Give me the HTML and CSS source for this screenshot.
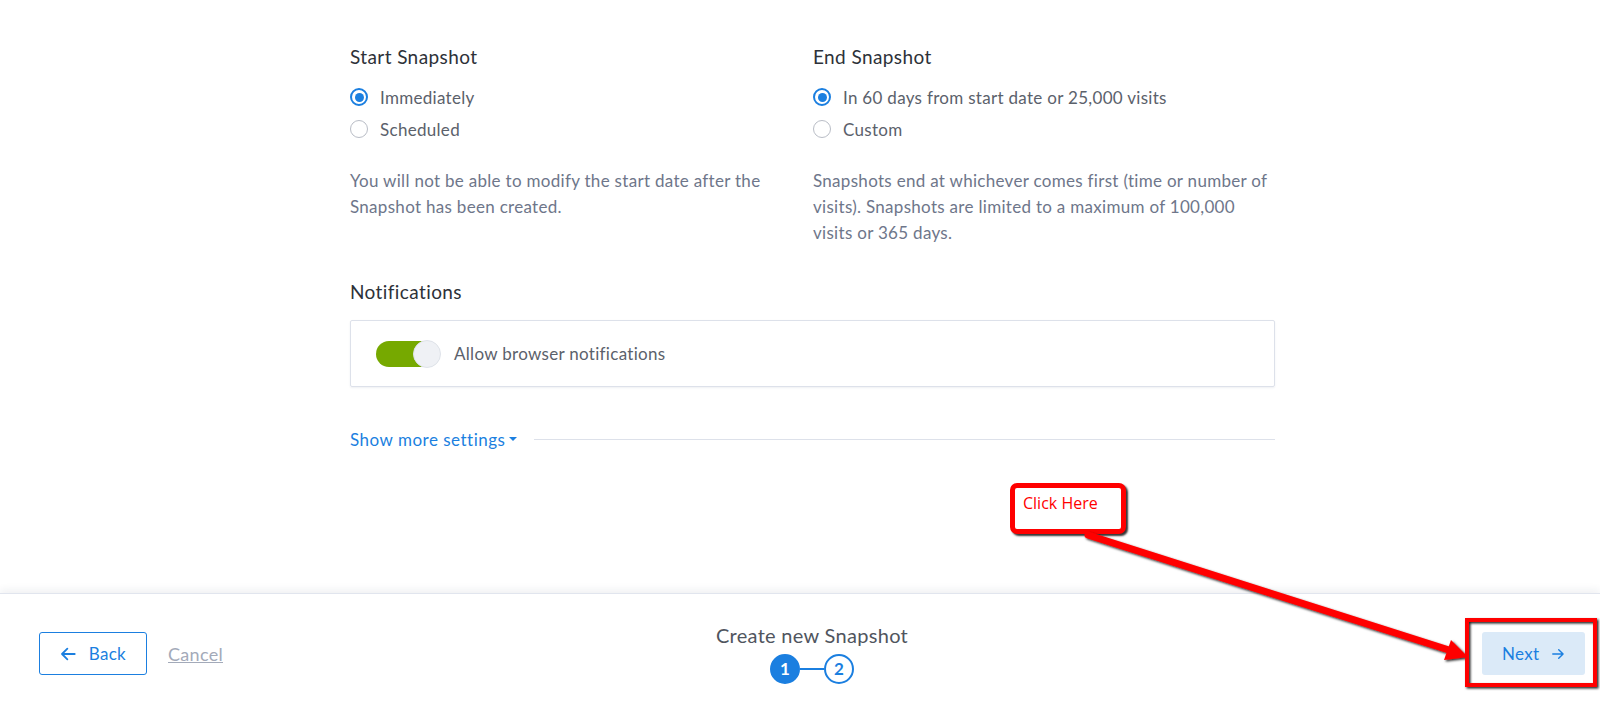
FILE: index.html
```html
<!DOCTYPE html>
<html lang="en">
<head>
  <meta charset="UTF-8">
  <meta name="viewport" content="width=device-width, initial-scale=1.0">
  <title>Create new Snapshot</title>
  <link rel="stylesheet" href="styles.css">
</head>
<body>

<main class="settings">
  <div class="columns">
    <section class="group">
      <h2 class="group-title">Start Snapshot</h2>
      <ul class="radio-list">
        <li class="radio-row"><span class="radio checked"></span>Immediately</li>
        <li class="radio-row"><span class="radio"></span>Scheduled</li>
      </ul>
      <p class="hint">You will not be able to modify the start date after the Snapshot has been created.</p>
    </section>
    <section class="group">
      <h2 class="group-title">End Snapshot</h2>
      <ul class="radio-list">
        <li class="radio-row"><span class="radio checked"></span>In 60 days from start date or 25,000 visits</li>
        <li class="radio-row"><span class="radio"></span>Custom</li>
      </ul>
      <p class="hint">Snapshots end at whichever comes first (time or number of visits). Snapshots are limited to a maximum of 100,000 visits or 365 days.</p>
    </section>
  </div>

  <h2 class="group-title notif-title">Notifications</h2>
  <div class="notif-box">
    <span class="toggle on"><span class="knob"></span></span>
    <span class="notif-label">Allow browser notifications</span>
  </div>

  <div class="more-row">
    <a class="more-link" href="#">Show more settings<span class="caret"></span></a>
    <span class="more-line"></span>
  </div>
</main>

<footer class="wizard-bar">
  <div class="bar-left">
    <button class="btn btn-outline">
      <svg width="16" height="14" viewBox="0 0 16 14"><path d="M15 7H2M7.5 1.5 2 7l5.5 5.5" fill="none" stroke="currentColor" stroke-width="1.8" stroke-linecap="round" stroke-linejoin="round"/></svg>
      Back
    </button>
    <a class="cancel" href="#">Cancel</a>
  </div>
  <div class="bar-center">
    <div class="wizard-title">Create new Snapshot</div>
    <div class="steps">
      <span class="step active">1</span>
      <span class="step-line"></span>
      <span class="step">2</span>
    </div>
  </div>
  <div class="bar-right">
    <button class="btn btn-soft">
      Next
      <svg width="16" height="14" viewBox="0 0 16 14"><path d="M1 7h13M8.5 1.5 14 7l-5.5 5.5" fill="none" stroke="currentColor" stroke-width="1.8" stroke-linecap="round" stroke-linejoin="round"/></svg>
    </button>
  </div>
</footer>

<!-- annotation drawn over the screenshot -->
<div class="callout">Click Here</div>
<svg class="annotation" width="1600" height="704" viewBox="0 0 1600 704">
  <defs>
    <filter id="shade" x="-10%" y="-10%" width="120%" height="120%">
      <feDropShadow dx="1.5" dy="1.5" stdDeviation="1" flood-color="#000" flood-opacity="0.85"/>
    </filter>
  </defs>
  <g filter="url(#shade)">
    <line x1="1088" y1="535" x2="1449" y2="650" stroke="#f00" stroke-width="7" stroke-linecap="round"/>
    <polygon points="1468,657 1444,660 1451,640" fill="#f00"/>
    <rect x="1467" y="620" width="128" height="65" fill="none" stroke="#f00" stroke-width="4"/>
  </g>
</svg>

</body>
</html>
```

FILE: styles.css
```css
body {
  margin: 0;
  font-family: Lato, "Open Sans", sans-serif;
  letter-spacing: 0.3px;
  background: #fff;
  color: #2d3138;
  height: 704px;
  overflow: hidden;
  position: relative;
}

.settings {
  box-sizing: border-box;
  height: 593px;
  width: 925px;
  margin-left: 350px;
  padding-top: 45px;
}

.columns {
  display: grid;
  grid-template-columns: 463px 463px;
}

.group-title {
  margin: 0;
  font-size: 19px;
  line-height: 24px;
  font-weight: 400;
  letter-spacing: 0.4px;
  color: #2d3138;
}

.radio-list {
  list-style: none;
  margin: 12px 0 0;
  padding: 0;
}
.radio-row {
  display: flex;
  align-items: center;
  height: 32px;
  font-size: 17px;
  color: #5b616b;
}
.radio {
  box-sizing: border-box;
  width: 18px;
  height: 18px;
  border-radius: 50%;
  border: 1.5px solid #b9bdc6;
  margin-right: 12px;
  display: flex;
  align-items: center;
  justify-content: center;
}
.radio.checked {
  border: 2px solid #1b7fe0;
}
.radio.checked::after {
  content: "";
  width: 9px;
  height: 9px;
  border-radius: 50%;
  background: #1b7fe0;
}

.hint {
  margin: 23px 0 0;
  font-size: 17px;
  line-height: 26px;
  color: #6e768a;
}

.notif-title {
  margin-top: 34px;
}
.notif-box {
  box-sizing: border-box;
  margin-top: 16px;
  height: 67px;
  border: 1px solid #dde1ea;
  border-radius: 2px;
  box-shadow: 0 1px 2px rgba(40, 60, 100, 0.08);
  display: flex;
  align-items: center;
  padding-left: 25px;
}
.toggle {
  position: relative;
  width: 64px;
  height: 26px;
  border-radius: 13px;
  background: #76a900;
}
.toggle .knob {
  position: absolute;
  right: -1px;
  top: -1px;
  box-sizing: border-box;
  width: 28px;
  height: 28px;
  border-radius: 50%;
  background: #eff1f5;
  border: 1px solid #dfe3ea;
}
.notif-label {
  margin-left: 14px;
  font-size: 17px;
  color: #5b616b;
}

.more-row {
  margin-top: 40px;
  display: flex;
  align-items: center;
  height: 24px;
}
.more-link {
  font-size: 17px;
  letter-spacing: 0.5px;
  color: #1b7fe0;
  text-decoration: none;
  display: flex;
  align-items: center;
}
.caret {
  margin-left: 4px;
  width: 0;
  height: 0;
  border-left: 4px solid transparent;
  border-right: 4px solid transparent;
  border-top: 4px solid #1b7fe0;
}
.more-line {
  flex: 1;
  margin-left: 17px;
  height: 1px;
  background: #dde1ea;
}

/* bottom wizard bar */
.wizard-bar {
  box-sizing: border-box;
  height: 111px;
  border-top: 1px solid #e1e5ee;
  box-shadow: 0 -3px 8px rgba(30, 40, 70, 0.07);
  display: grid;
  grid-template-columns: 1fr auto 1fr;
  align-items: center;
  padding: 9px 15px 0 39px;
}
.bar-left {
  display: flex;
  align-items: center;
}
.bar-right {
  display: flex;
  justify-content: flex-end;
}
.btn {
  box-sizing: border-box;
  height: 43px;
  display: flex;
  align-items: center;
  gap: 13px;
  padding: 0 20px;
  font-family: Lato, sans-serif;
  font-size: 17px;
  letter-spacing: 0.3px;
  border-radius: 3px;
  color: #1b7fe0;
  cursor: pointer;
}
.btn-outline {
  width: 108px;
  background: #fff;
  border: 1.5px solid #1b7fe0;
}
.btn-soft {
  width: 103px;
  background: #dbeaf8;
  border: none;
}
.cancel {
  margin-left: 21px;
  font-size: 18px;
  color: #a3aab9;
}

.bar-center {
  display: flex;
  flex-direction: column;
  align-items: center;
}
.wizard-title {
  font-size: 20px;
  line-height: 22px;
  color: #50555e;
}
.steps {
  margin-top: 8px;
  display: flex;
  align-items: center;
}
.step {
  box-sizing: border-box;
  width: 30px;
  height: 30px;
  border-radius: 50%;
  border: 2px solid #1b7fe0;
  background: #fff;
  color: #1b7fe0;
  font-weight: 700;
  font-size: 17px;
  letter-spacing: 0;
  display: flex;
  align-items: center;
  justify-content: center;
}
.step.active {
  background: #1b7fe0;
  color: #fff;
}
.step-line {
  width: 24px;
  height: 2px;
  background: #1b7fe0;
}

.callout {
  position: absolute;
  left: 1010px;
  top: 483px;
  box-sizing: border-box;
  width: 116px;
  height: 51px;
  border: 5px solid #f00;
  border-radius: 7px;
  background: #fff;
  box-shadow: 2px 2px 2px rgba(0, 0, 0, 0.8);
  font-family: "Open Sans", sans-serif;
  font-size: 16px;
  letter-spacing: 0;
  color: #f00;
  padding: 4px 0 0 8px;
}
.annotation {
  position: absolute;
  left: 0;
  top: 0;
  pointer-events: none;
}
```
